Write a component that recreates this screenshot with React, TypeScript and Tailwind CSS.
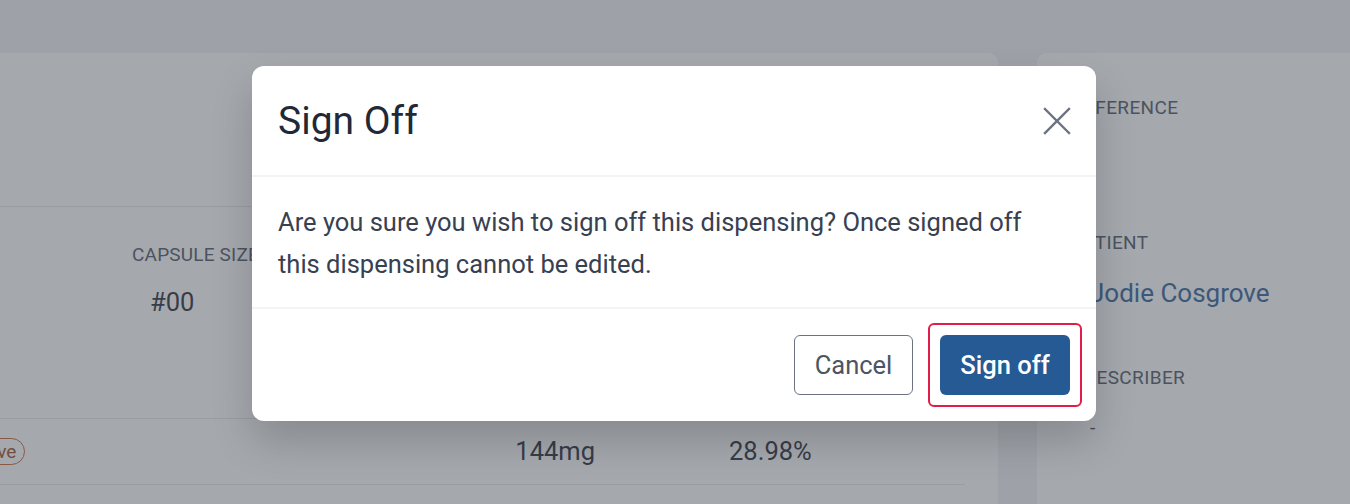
import React from "react";

export default function App() {
  return (
    <div className="relative h-[504px] w-[1350px] overflow-hidden bg-[#f1f2f4] font-['Roboto',sans-serif]">
      {/* Background page */}
      <div className="flex h-full gap-[39px] pt-[53px]">
        <div className="flex w-[998px] flex-col rounded-tr-[10px] bg-white">
          <div className="h-[154px] border-b border-[#e5e7eb]" />
          <div className="flex h-[212px] border-b border-[#e5e7eb] pl-[132px] pt-[36px]">
            <div className="flex flex-col">
              <span className="text-[19px] uppercase leading-[24px] tracking-[0.01em] text-[#4b5563]">Capsule Size</span>
              <span className="mt-[20px] pl-[18px] text-[25.5px] leading-[30px] text-[#1f2937]">#00</span>
            </div>
          </div>
          <div className="mr-[33px] flex h-[66px] items-center border-b border-[#e5e7eb]">
            <span className="ml-[-45px] rounded-full border border-[#c2612a] px-[8px] text-[19px] leading-[25px] text-[#9a4a1c]">Active</span>
            <span className="ml-[490px] text-[25.5px] text-[#1f2937]">144mg</span>
            <span className="ml-[134px] text-[25.5px] text-[#1f2937]">28.98%</span>
          </div>
        </div>
        <div className="flex flex-1 flex-col rounded-tl-[10px] bg-white pl-[35px] pt-[43px]">
          <span className="text-[19px] uppercase leading-[24px] tracking-[0.02em] text-[#4b5563]">Reference</span>
          <span className="mt-[111px] text-[19px] uppercase leading-[24px] tracking-[0.02em] text-[#4b5563]">Patient</span>
          <span className="mt-[22px] pl-[18px] text-[26px] leading-[32px] text-[#2a5e9a]">Jodie Cosgrove</span>
          <span className="mt-[57px] text-[19px] uppercase leading-[24px] tracking-[0.02em] text-[#4b5563]">Prescriber</span>
          <span className="mt-[26px] pl-[18px] text-[19px] leading-[24px] text-[#374151]">-</span>
        </div>
      </div>

      {/* Backdrop */}
      <div className="absolute inset-0 bg-[#4b515b]/50" />

      {/* Modal */}
      <div className="absolute left-[252px] top-[66px] flex w-[844px] flex-col rounded-[12px] bg-white shadow-[0_20px_40px_rgba(0,0,0,0.18)]">
        <div className="flex h-[111px] items-center justify-between border-b-2 border-[#f3f4f6] pl-[26px] pr-[24px]">
          <h2 className="text-[39px] font-normal leading-[46px] text-[#1f2937]">Sign Off</h2>
          <button className="flex h-[30px] w-[30px] items-center justify-center text-[#6b7280]">
            <svg width="28" height="28" viewBox="0 0 28 28" fill="none" stroke="currentColor" strokeWidth="2.4" strokeLinecap="square">
              <path d="M2 2L26 26M26 2L2 26" />
            </svg>
          </button>
        </div>
        <div className="border-b-2 border-[#f3f4f6] pb-[22px] pl-[26px] pr-[60px] pt-[24px]">
          <p className="text-[25.5px] leading-[42px] text-[#374151]">
            Are you sure you wish to sign off this dispensing? Once signed off this dispensing cannot be edited.
          </p>
        </div>
        <div className="flex items-center justify-end gap-[15px] pb-[14px] pl-[26px] pr-[14px] pt-[14px]">
          <button className="h-[60px] w-[119px] rounded-[6px] border border-[#6b7280] bg-white text-[25.5px] text-[#4b5563]">
            Cancel
          </button>
          <div className="rounded-[6px] border-2 border-[#e11d48] p-[10px]">
            <button className="block h-[60px] w-[130px] rounded-[6px] bg-[#255a94] text-[25.5px] font-medium text-white">
              Sign off
            </button>
          </div>
        </div>
      </div>
    </div>
  );
}
